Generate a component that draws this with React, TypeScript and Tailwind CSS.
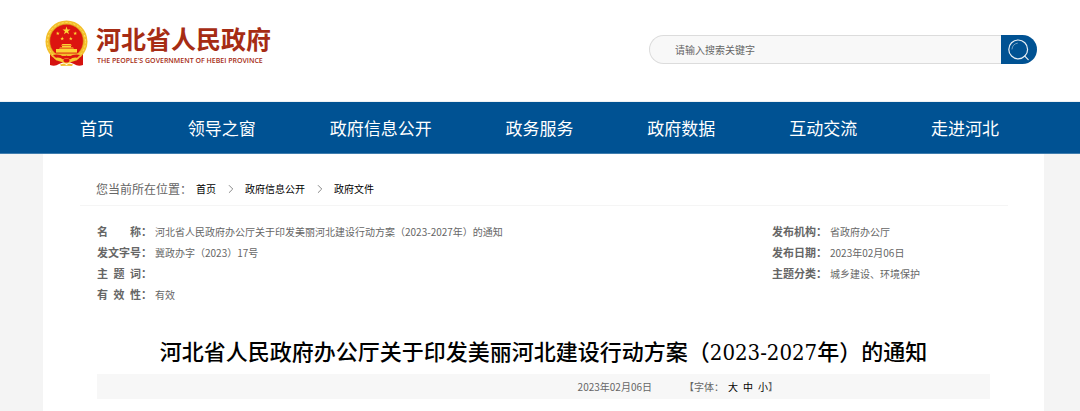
import React from 'react';
import { ChevronRight } from 'lucide-react';


const navItems = ['首页', '领导之窗', '政府信息公开', '政务服务', '政府数据', '互动交流', '走进河北'];

const docInfo = [
    { label: '名\u2003\u2003称：', value: '河北省人民政府办公厅关于印发美丽河北建设行动方案（2023-2027年）的通知' },
    { label: '发文字号：', value: '冀政办字（2023）17号' },
    { label: '主\u2002题\u2002词：', value: '' },
    { label: '有\u2002效\u2002性：', value: '有效' },
];

const publishInfo = [
    { label: '发布机构：', value: '省政府办公厅' },
    { label: '发布日期：', value: '2023年02月06日' },
    { label: '主题分类：', value: '城乡建设、环境保护' },
];

const starPoints = '0,-10 2.4,-3.1 9.5,-3.1 3.8,1.2 5.9,8.1 0,3.9 -5.9,8.1 -3.8,1.2 -9.5,-3.1 -2.4,-3.1';

function Emblem() {
    return (
        <svg viewBox="0 0 43 47" className="h-[47px] w-[43px] shrink-0" aria-hidden="true">
            <path d="M5 34 L5 45 Q10 47 14 44 L21.5 41 L29 44 Q33 47 38 45 L38 34 Z" fill="#d5120f" />
            <circle cx="21.5" cy="21.5" r="21" fill="#f3bf2b" />
            <circle cx="21.5" cy="21.5" r="19" fill="none" stroke="#ffe066" strokeWidth="1" strokeDasharray="2 2" />
            <circle cx="21.5" cy="21" r="16.8" fill="#dc1410" stroke="#d99a1a" strokeWidth="0.6" />
            <g fill="#fcd535">
                <polygon points={starPoints} transform="translate(21.5 10.8) scale(0.42)" />
                <polygon points={starPoints} transform="translate(12.8 13.4) scale(0.2)" />
                <polygon points={starPoints} transform="translate(30.2 13.4) scale(0.2)" />
                <polygon points={starPoints} transform="translate(17.2 18.6) scale(0.2)" />
                <polygon points={starPoints} transform="translate(25.8 18.6) scale(0.2)" />
                <path d="M16 25.5 L17.5 24 H25.5 L27 25.5 Z" />
                <path d="M17 26 H26 V27.4 H17 Z" />
                <path d="M14 28.6 L15 27.4 H28 L29 28.6 Z" />
                <path d="M11 29 H32 V32.6 H11 Z" />
                <path d="M7.6 33.6 H35.4 L33.4 36 H9.6 Z" fill="#f3bf2b" />
            </g>
            <path d="M8 35 Q14 33.5 19 37 L21.5 35.6 L24 37 Q29 33.5 35 35 L31 39 Q26 38 24.5 41 H18.5 Q17 38 12 39 Z" fill="#dc1410" />
            <path d="M9 38 Q15 36.5 18 39.5 Q21.5 36.5 25 39.5 Q28 36.5 34 38 L31.5 40.4 Q27.5 39.6 25.4 42 Q21.5 45.5 17.6 42 Q15.5 39.6 11.5 40.4 Z" fill="#f8c930" />
            <ellipse cx="21.5" cy="40.6" rx="3" ry="2" fill="#dc1410" />
            <path d="M15 44.6 L19 43.4 L21.5 45 L24 43.4 L28 44.6 L27 46 L21.5 45.8 L16 46 Z" fill="#f3bf2b" />
        </svg>
    );
}

function SearchBox() {
    return (
        <form className="flex h-[29px] w-[388px]" onSubmit={(e) => e.preventDefault()}>
            <input
                type="text"
                aria-label="请输入搜索关键字"
                placeholder="请输入搜索关键字"
                className="min-w-0 flex-1 rounded-l-full border border-r-0 border-[#dcdcdc] bg-[#f8f8f8] pl-[25px] text-[10px] text-gray-700 placeholder:text-[#666] focus:outline-none"
            />
            <button type="submit" aria-label="搜索" className="flex w-9 items-center justify-center rounded-r-full bg-[#005293]">
                <svg viewBox="0 0 22 22" className="h-[22px] w-[22px]" fill="none" stroke="#e6eef5" strokeWidth="1.2" strokeLinecap="round">
                    <circle cx="10.2" cy="10.4" r="9.4" />
                    <path d="M16.8 17.2 L20.2 20.6" />
                    <path d="M4 10 A6.4 6.4 0 0 1 9.4 4.2" stroke="#7fa8c9" strokeWidth="0.9" />
                </svg>
            </button>
        </form>
    );
}

function Header() {
    return (
        <header className="flex h-[102px] items-start justify-between border-b border-[#edf1f4] bg-white pr-[43px] pl-[45px]">
            <a href="#" className="flex pt-5">
                <Emblem />
                <span className="flex flex-col pt-1 pl-2 text-[#a62c14]">
                    <span className="text-[25px] leading-7 font-bold whitespace-nowrap">河北省人民政府</span>
                    <span className="pt-[3px] pl-px font-['Open_Sans',sans-serif] text-[7px] leading-3 font-semibold whitespace-nowrap">
                        THE PEOPLE'S GOVERNMENT OF HEBEI PROVINCE
                    </span>
                </span>
            </a>
            <div className="pt-[35px]">
                <SearchBox />
            </div>
        </header>
    );
}

function NavBar() {
    return (
        <nav className="border-b border-[#3f7dae] bg-[#005293] pr-[81px] pl-20">
            <ul className="flex h-[51px] items-center justify-between">
                {navItems.map((item) => (
                    <li key={item}>
                        <a href="#" className="text-[17px] whitespace-nowrap text-white">{item}</a>
                    </li>
                ))}
            </ul>
        </nav>
    );
}

function Breadcrumb() {
    return (
        <div className="mr-9 ml-[37px] flex h-[52px] items-center border-b border-[#f5f5f5] pt-[18px] pl-4 text-[10px] text-black">
            <span className="w-[100px] text-[12px] text-[#666]">您当前所在位置：</span>
            <a href="#">首页</a>
            <ChevronRight className="mr-[7px] ml-2 size-3.5 text-[#777]" strokeWidth={1.5} />
            <a href="#">政府信息公开</a>
            <ChevronRight className="mr-[7px] ml-2 size-3.5 text-[#777]" strokeWidth={1.5} />
            <a href="#">政府文件</a>
        </div>
    );
}

function InfoList({ items }: { items: { label: string; value: string }[] }) {
    return (
        <dl>
            {items.map((item) => (
                <div key={item.label} className="flex h-[21px] items-center text-[10px] text-[#666]">
                    <dt className="w-[58px] shrink-0 text-[11px] font-bold whitespace-nowrap text-[#666]">{item.label}</dt>
                    <dd>{item.value}</dd>
                </div>
            ))}
        </dl>
    );
}

function Article() {
    return (
        <article className="pr-[54px] pl-[54px]">
            <div className="flex justify-between pt-[15px]">
                <InfoList items={docInfo} />
                <div className="w-[218px]">
                    <InfoList items={publishInfo} />
                </div>
            </div>
            <h1 className="pt-8 pb-[5px] text-center font-['DejaVu_Serif_Condensed','Noto_Sans_CJK_SC',serif] text-[22px] leading-8 font-medium whitespace-nowrap text-black">
                河北省人民政府办公厅关于印发美丽河北建设行动方案（2023-2027年）的通知
            </h1>
            <div className="flex h-[25px] items-center justify-end bg-[#f7f7f7] pr-[212px] text-[10px] text-[#666]">
                <time className="pr-8" dateTime="2023-02-06">2023年02月06日</time>
                <span>【字体：</span>
                <span className="flex gap-[5px] pl-1 text-black">
                    <button type="button">大</button>
                    <button type="button">中</button>
                    <button type="button">小</button>
                </span>
                <span>】</span>
            </div>
        </article>
    );
}

function App() {
    return (
        <div className="min-h-screen bg-[#f4f4f4] font-['Noto_Sans_CJK_SC',sans-serif]">
            <Header />
            <NavBar />
            <main className="mr-9 ml-[43px] bg-white pb-3">
                <Breadcrumb />
                <Article />
            </main>
        </div>
    );
}


export default App;
